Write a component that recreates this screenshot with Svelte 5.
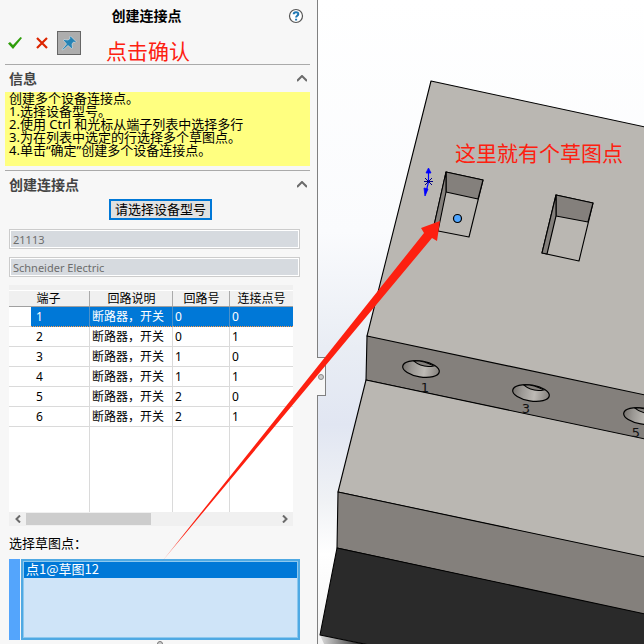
<script>
  const notes = [
    '创建多个设备连接点。',
    '1.选择设备型号。',
    '2.使用 Ctrl 和光标从端子列表中选择多行',
    '3.为在列表中选定的行选择多个草图点。',
    '4.单击“确定”创建多个设备连接点。'
  ];
  const rows = [
    [1, 0, 0],
    [2, 0, 1],
    [3, 1, 0],
    [4, 1, 1],
    [5, 2, 0],
    [6, 2, 1]
  ];
  const holes = [
    { x: 421, y: 369, label: '1', lx: 425, ly: 392 },
    { x: 531, y: 393, label: '3', lx: 526, ly: 413 },
    { x: 642, y: 416, label: '5', lx: 636, ly: 437 }
  ];
  let selected = $state(0);
  let pinned = $state(true);
  let infoOpen = $state(true);
  let createOpen = $state(true);
  let part = $state('21113');
  let maker = $state('Schneider Electric');
</script>

<div class="app">
  <aside class="panel">
    <header>
      <div class="title">
        <h1>创建连接点</h1>
        <button class="help" aria-label="帮助">
          <svg width="16" height="16" viewBox="0 0 16 16">
            <circle cx="8" cy="8" r="6.5" fill="#fff" stroke="#555" stroke-width="1.2" />
            <path d="M5.7 6.2C5.7 3.4 10.4 3.5 10.3 6.1C10.2 7.7 8.1 7.7 8.1 9.5M8.1 10.8V12.6" fill="none" stroke="#1f78b4" stroke-width="2" />
          </svg>
        </button>
      </div>
      <div class="tools">
        <button aria-label="确定">
          <svg width="16" height="14" viewBox="0 0 16 14">
            <path d="M1 7.5L3 6L6 9L13.5 1L15 2L6 13Z" fill="#2f9e0b" />
          </svg>
        </button>
        <button aria-label="取消">
          <svg width="12" height="12" viewBox="0 0 12 12">
            <path d="M1 1L11 11M11 1L1 11" stroke="#dc2500" stroke-width="2.2" />
          </svg>
        </button>
        <button class="pin" aria-label="保持可见" aria-pressed={pinned} onclick={() => (pinned = !pinned)}>
          <svg width="16" height="16" viewBox="0 0 16 16">
            <path d="M9.5 1L15 6.5L14 7.5L12.5 7L11 9L11.5 13L10.5 13.5L7 10.5L2 15L1 14.5L5.5 9L2.5 5.5L3 4.5L7 5L9 3.5L8.5 2Z" fill="#2583b5" stroke="#dde6ea" stroke-width=".6" />
          </svg>
        </button>
        <span class="callout">点击确认</span>
      </div>
    </header>

    <section>
      <button class="head" aria-expanded={infoOpen} onclick={() => (infoOpen = !infoOpen)}>
        <span>信息</span>
        <svg width="10" height="7" viewBox="0 0 10 7"><path d="M0 6L5 1L10 6" /></svg>
      </button>
      {#if infoOpen}
        <div class="notes">
          {#each notes as note}<p>{note}</p>{/each}
        </div>
      {/if}
    </section>

    <section>
      <button class="head" aria-expanded={createOpen} onclick={() => (createOpen = !createOpen)}>
        <span>创建连接点</span>
        <svg width="10" height="7" viewBox="0 0 10 7"><path d="M0 6L5 1L10 6" /></svg>
      </button>
      {#if createOpen}
        <div class="body">
          <button class="choose">请选择设备型号</button>
          <input class="field" aria-label="设备型号" readonly bind:value={part} />
          <input class="field" aria-label="制造商" readonly bind:value={maker} />
          <div class="grid">
            <table>
              <thead>
                <tr><th class="mark"></th><th class="pole">端子</th><th class="desc">回路说明</th><th class="loop">回路号</th><th>连接点号</th></tr>
              </thead>
              <tbody>
                {#each rows as [pole, loop, point], i}
                  <tr class:on={selected === i} onclick={() => (selected = i)}>
                    <td class="mark"></td><td class="pole">{pole}</td><td>断路器，开关</td><td>{loop}</td><td>{point}</td>
                  </tr>
                {/each}
                <tr class="rest"><td class="mark"></td><td class="pole"></td><td></td><td></td><td></td></tr>
              </tbody>
            </table>
            <div class="scroll">
              <button aria-label="向左滚动"><svg width="6" height="8" viewBox="0 0 6 8"><path d="M5 0.5L1.5 4L5 7.5" /></svg></button>
              <div class="track"><div class="thumb"></div></div>
              <button aria-label="向右滚动"><svg width="6" height="8" viewBox="0 0 6 8"><path d="M1 0.5L4.5 4L1 7.5" /></svg></button>
            </div>
          </div>
          <label class="caption" for="points">选择草图点：</label>
          <div class="picker">
            <span class="swatch"></span>
            <select id="points" size="4">
              <option selected>点1@草图12</option>
            </select>
          </div>
        </div>
      {/if}
    </section>
    <span class="grip"></span>
  </aside>

  <main>
    <svg class="scene" viewBox="318 0 326 644" preserveAspectRatio="xMinYMin slice">
      <defs>
        <linearGradient id="sky" x1="0" y1="0" x2="0" y2="1">
          <stop offset="0" stop-color="#fff" />
          <stop offset=".36" stop-color="#fafbfd" />
          <stop offset=".54" stop-color="#e9edf4" />
          <stop offset=".66" stop-color="#e1e6f2" />
          <stop offset=".78" stop-color="#f0f2f5" />
          <stop offset=".86" stop-color="#fff" />
          <stop offset="1" stop-color="#f4f4f4" />
        </linearGradient>
        <linearGradient id="bore">
          <stop offset="0" stop-color="#77736f" />
          <stop offset=".25" stop-color="#9b9894" />
          <stop offset=".6" stop-color="#bdbab5" />
          <stop offset="1" stop-color="#84807c" />
        </linearGradient>
        <linearGradient id="shade">
          <stop offset="0" stop-color="#ddd" />
          <stop offset="1" stop-color="#222" />
        </linearGradient>
      </defs>
      <rect x="318" width="326" height="644" fill="url(#sky)" />
      <path d="M320 635L324 644H364Z" fill="url(#shade)" />
      <g stroke="#000" stroke-width="1.1" stroke-linejoin="round">
        <path d="M431 81L650 128V440L367 336Z" fill="#bab7b2" />
        <path d="M367 336L650 396V441L366 380Z" fill="#84807c" />
        <path d="M366 380L650 440V559L338 492Z" fill="#bab7b2" />
        <path d="M338 492L650 558V616L337 548Z" fill="#84807c" />
        <path d="M337 548L650 615V702L320 635Z" fill="#2a2a2a" />
        <path d="M446 172L483 180L469 237L433 230Z" fill="#bab7b2" />
        <path d="M446 172L483 180L478 199L446 192Z" fill="#84807c" />
        <path d="M446 172V192L438 231L433 230Z" fill="#84807c" />
        <path d="M556 195L593 203L579 261L542 253Z" fill="#bab7b2" />
        <path d="M556 195L593 203L588 222L556 216Z" fill="#84807c" />
        <path d="M556 195V216L547 254L542 253Z" fill="#84807c" />
      </g>
      {#each holes as hole}
        <g transform="translate({hole.x} {hole.y}) rotate(9)" stroke="#000">
          <ellipse rx="18.5" ry="8" fill="url(#bore)" stroke-width="1.2" />
          <path d="M-9 -7Q1 -1 12 -5Q2 -9 -9 -7" fill="#84807c" />
        </g>
        <text class="engraved" x={hole.lx} y={hole.ly}>{hole.label}</text>
      {/each}
      <g fill="#00f" stroke="#00f">
        <path d="M428.5 172V182L426 192" fill="none" stroke-width="1.2" />
        <path d="M428.5 168L431 173H426ZM424 188L428 189L425 196Z" stroke-width=".8" />
        <path d="M425 178L432 185M432 178L425 185M424 181.5H433" stroke="#000080" />
      </g>
      <circle cx="457.5" cy="218.5" r="4" fill="#4fa5ff" stroke="#000" stroke-width="1.2" />
      <text class="remark" x="455" y="161">这里就有个草图点</text>
    </svg>
    <button class="splitter" aria-label="折叠面板"></button>
  </main>

  <svg class="arrow" width="450" height="570" viewBox="0 0 450 570">
    <defs>
      <linearGradient id="tail" gradientUnits="userSpaceOnUse" x1="160" y1="563" x2="184" y2="534">
        <stop offset="0" stop-color="#fd2010" stop-opacity=".2" />
        <stop offset="1" stop-color="#fd2010" />
      </linearGradient>
    </defs>
    <path d="M160 564L424 233L421 228L440 221L437 241L432 238Z" fill="url(#tail)" />
  </svg>
</div>

<style>
  .app {
    position: relative;
    display: flex;
    min-height: 100vh;
    overflow: hidden;
    color: #000;
    font: 13px/13px "Noto Sans", "Noto Sans CJK SC", sans-serif;
  }
  button {
    padding: 0;
    border: 0;
    background: none;
    color: inherit;
    font: inherit;
  }
  svg { display: block; }
  h1, p { margin: 0; font: inherit; }
  .panel {
    position: relative;
    box-sizing: border-box;
    flex: 0 0 318px;
    padding: 0 7px 0 5px;
    border-right: 1px solid #808080;
    background: #f7f7f7;
  }
  header { height: 64px; }
  .title {
    display: flex;
    align-items: center;
    height: 31px;
    padding: 0 6px 0 0;
  }
  h1 {
    flex: 1;
    text-align: center;
    font-size: 14px;
    font-weight: 700;
  }
  .tools {
    display: flex;
    align-items: center;
    gap: 7px;
    height: 24px;
    padding-left: 2px;
  }
  .tools button {
    display: grid;
    place-items: center;
    width: 16px;
  }
  .tools button + button { margin-left: 4px; }
  .tools button + .pin {
    box-sizing: border-box;
    width: 24px;
    height: 24px;
    margin-left: 0;
    border: 1px solid #666;
    background: #adadad;
  }
  .callout {
    padding: 16px 0 0 18px;
    color: #fd2010;
    font-size: 21px;
    line-height: 24px;
    white-space: nowrap;
  }
  section { border-top: 1px solid #aaa; }
  .head {
    display: flex;
    align-items: center;
    justify-content: space-between;
    width: 100%;
    height: 27px;
    padding: 0 3px 0 4px;
    color: #444;
    font-size: 14px;
    font-weight: 700;
  }
  .head path, .scroll path { fill: none; stroke: #6b6b6b; stroke-width: 2; }
  .notes {
    height: 74px;
    margin-bottom: 4px;
    background: #ffff80;
    white-space: nowrap;
  }
  .notes p { padding-left: 4px; }
  .body {
    display: flex;
    flex-direction: column;
    padding: 0 10px 0 4px;
  }
  .choose {
    align-self: center;
    height: 21px;
    margin: 1px 0 9px 12px;
    padding: 0 4px;
    border: 2px solid #0078d7;
    background: #e1e1e1;
  }
  .field {
    box-sizing: border-box;
    width: 100%;
    height: 20px;
    margin-bottom: 8px;
    padding: 0 3px;
    border: 1px solid #ccc;
    outline: 1px solid #fff;
    outline-offset: -2px;
    border-radius: 0;
    background: #d6dadf;
    color: #6d6d6d;
    font: 11px/16px "Noto Sans", sans-serif;
  }
  .grid {
    margin: 0 7px 0 0;
    padding-top: 5px;
    background: #f0f0f0;
  }
  table {
    width: 100%;
    table-layout: fixed;
    border-collapse: separate;
    border-spacing: 0;
    background: #fff;
    white-space: nowrap;
  }
  th {
    box-sizing: border-box;
    height: 17px;
    padding: 0;
    border-top: 1px solid #fff;
    border-bottom: 1px solid #a0a0a0;
    box-shadow: inset -1px 0 #aaa;
    background: #f0f0f0;
    font-size: 12px;
    font-weight: 400;
    line-height: 15px;
  }
  th.mark { width: 22px; box-shadow: none; }
  th.pole { width: 59px; padding-right: 24px; }
  th.desc { width: 83px; }
  th.loop { width: 57px; }
  th:last-child { box-shadow: none; }
  td {
    box-sizing: border-box;
    height: 20px;
    padding: 0 2px;
    border-right: 1px solid #dadada;
    border-bottom: 1px solid #dadada;
    font-size: 12px;
    line-height: 16px;
  }
  td.mark { border-right: 0; }
  td.pole { padding-left: 5px; }
  td:last-child { border-right: 0; }
  .on td:not(.mark) {
    border-bottom: 1px dotted #ff9b48;
    border-right-color: #4c91ca;
    background: #0078d7;
    color: #fff;
  }
  .rest td { height: 85px; border-bottom: 0; }
  .scroll {
    display: flex;
    align-items: center;
    height: 14px;
  }
  .scroll button {
    display: grid;
    place-items: center;
    width: 17px;
    height: 14px;
  }
  .track { flex: 1; }
  .thumb { width: 50%; height: 12px; background: #cdcdcd; }
  .caption { margin: 9px 0 8px; line-height: 16px; }
  .picker { display: flex; gap: 1px; height: 81px; }
  .swatch { width: 11px; background: #54a5fc; }
  select {
    flex: 1;
    box-sizing: border-box;
    padding: 0;
    border: 2px solid #4fa9e3;
    border-radius: 0;
    outline: 1px solid #8ec8ee;
    outline-offset: -3px;
    background: #cfe4f8;
    color: #000;
    font: 13px "Noto Sans CJK SC", sans-serif;
    overflow: hidden;
  }
  option {
    display: flex;
    align-items: center;
    box-sizing: border-box;
    height: 16px;
    min-height: 0;
    margin: 1px;
    padding: 0 2px 4px;
  }
  option:checked { background: #0078d7 linear-gradient(#0078d7, #0078d7); color: #fff; }
  .grip {
    position: absolute;
    bottom: -3px;
    left: 157px;
    width: 4px;
    height: 4px;
    border: 1px solid #777;
    border-radius: 50%;
    background: #ccc;
  }
  main { position: relative; flex: 1; min-width: 0; }
  .scene { position: absolute; inset: 0; width: 100%; height: 100%; }
  .engraved { font: 13px "DejaVu Sans", sans-serif; text-anchor: middle; fill: #111; }
  .remark { font: 21px "Noto Sans CJK SC", sans-serif; fill: #fd2010; }
  .splitter {
    position: absolute;
    top: 357px;
    left: -1px;
    width: 9px;
    height: 39px;
    border: 1px solid #808080;
    border-left: 0;
    background: #f7f7f7;
  }
  .splitter::after {
    content: "";
    position: absolute;
    top: 16px;
    left: 1px;
    width: 4px;
    height: 4px;
    border: 1px solid #888;
    border-radius: 50%;
    background: #ccc;
  }
  .arrow { position: absolute; top: 0; left: 0; pointer-events: none; }
</style>
